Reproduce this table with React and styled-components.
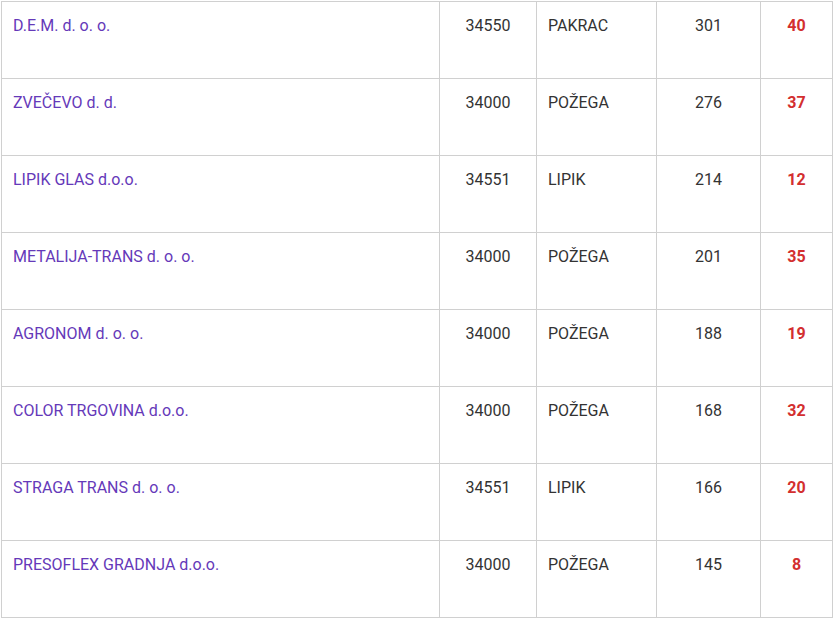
import React from 'react';
import styled, { createGlobalStyle } from 'styled-components';

const Global = createGlobalStyle`
  body {
    margin: 0;
    background: #ffffff;
    font-family: Roboto, 'Liberation Sans', sans-serif;
  }
`

const Table = styled.table`
  margin: 1px 0 0 1px;
  width: 831px;
  border-collapse: collapse;
  table-layout: fixed;
  font-size: 16px;
  line-height: 24px;
  color: #333333;
`

const Col = styled.col`
  width: ${p => p.$w}px;
`

const Cell = styled.td`
  height: 77px;
  box-sizing: border-box;
  padding: 12px 11px 10px;
  vertical-align: top;
  border: 1px solid #d0d0d0;
  text-align: ${p => p.$align || 'left'};
  &.name {
    color: #6539b9;
  }
  &.score {
    color: #d32f2f;
    font-weight: 700;
  }
`

const rows = [
  ['D.E.M. d. o. o.', '34550', 'PAKRAC', 301, 40],
  ['ZVEČEVO d. d.', '34000', 'POŽEGA', 276, 37],
  ['LIPIK GLAS d.o.o.', '34551', 'LIPIK', 214, 12],
  ['METALIJA-TRANS d. o. o.', '34000', 'POŽEGA', 201, 35],
  ['AGRONOM d. o. o.', '34000', 'POŽEGA', 188, 19],
  ['COLOR TRGOVINA d.o.o.', '34000', 'POŽEGA', 168, 32],
  ['STRAGA TRANS d. o. o.', '34551', 'LIPIK', 166, 20],
  ['PRESOFLEX GRADNJA d.o.o.', '34000', 'POŽEGA', 145, 8],
]

export default function App() {
  return (
    <>
      <Global />
      <Table>
        <colgroup>
          <Col $w={438} />
          <Col $w={97} />
          <Col $w={120} />
          <Col $w={104} />
          <Col $w={72} />
        </colgroup>
        <tbody>
          {rows.map((r, i) =>
            <tr key={`row_${i}`}>
              <Cell className='name'>{r[0]}</Cell>
              <Cell $align='center'>{r[1]}</Cell>
              <Cell>{r[2]}</Cell>
              <Cell $align='center'>{r[3]}</Cell>
              <Cell className='score' $align='center'>{r[4]}</Cell>
            </tr>
          )}
        </tbody>
      </Table>
    </>
  )
}
